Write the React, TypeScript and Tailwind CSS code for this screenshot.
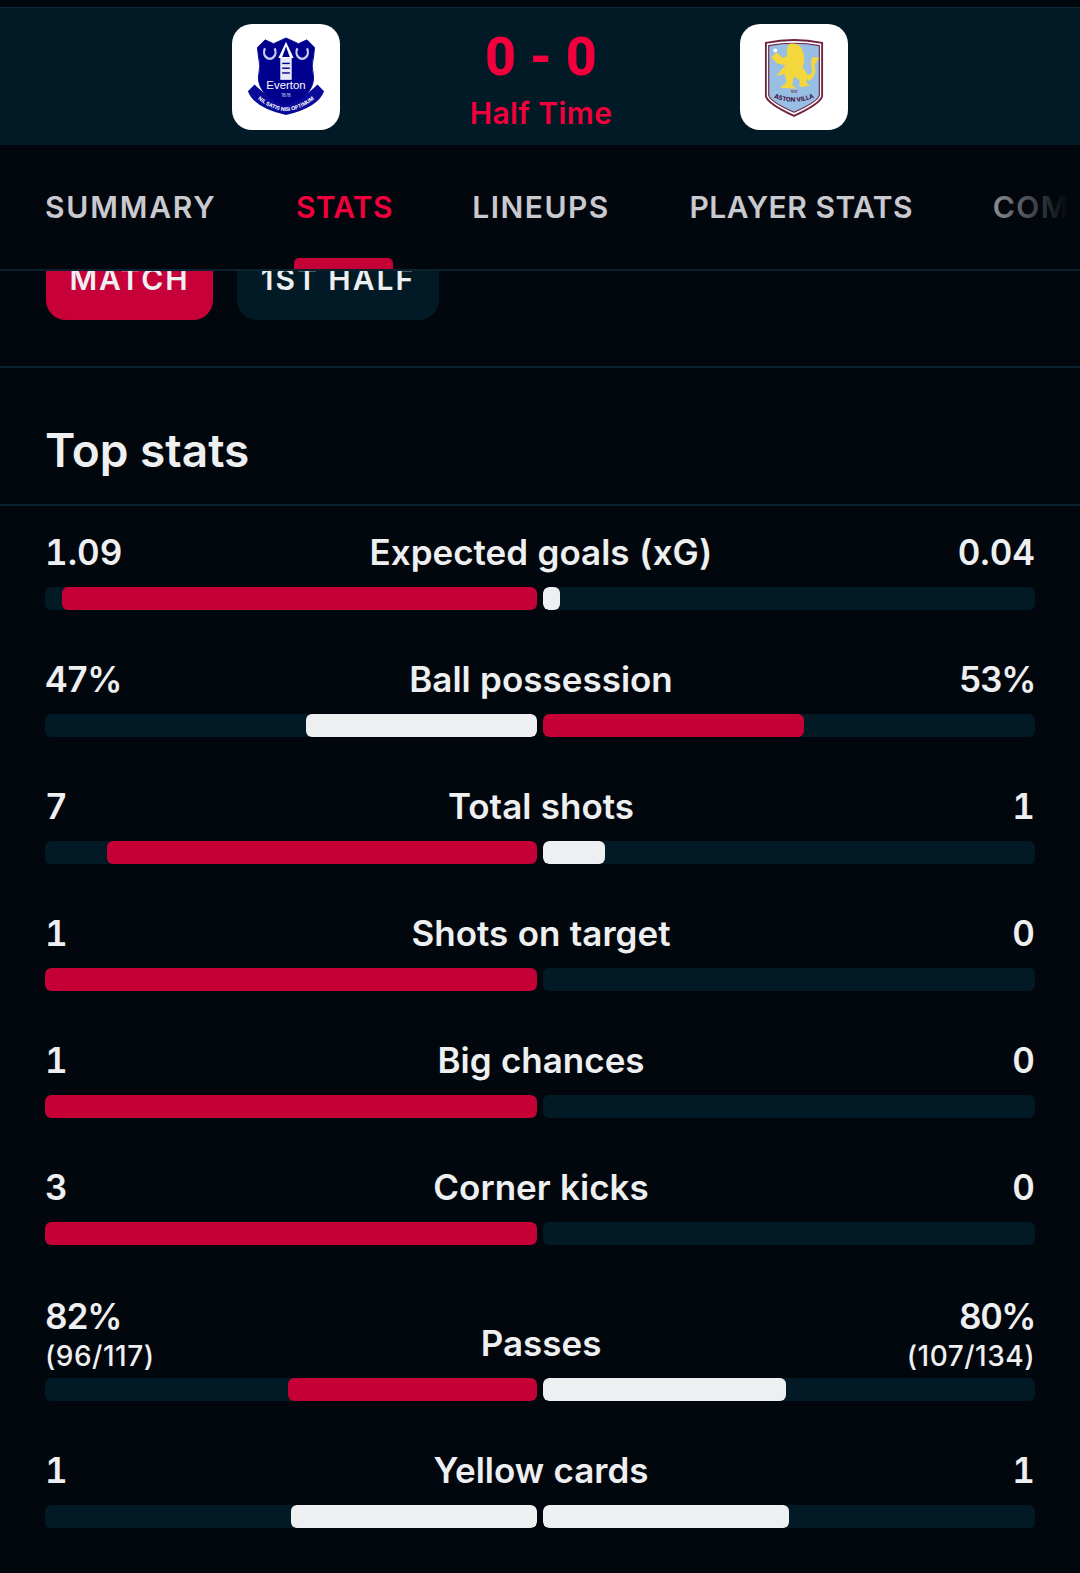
import React from "react";

const RED = "#c40037";
const WHITE = "#eeeff0";

type Row = {
  label: string;
  l: string;
  r: string;
  lSub?: string;
  rSub?: string;
  lw: number;
  rw: number;
  lc: string;
  rc: string;
};

const rows: Row[] = [
  { label: "Expected goals (xG)", l: "1.09", r: "0.04", lw: 96.5, rw: 3.5, lc: RED, rc: WHITE },
  { label: "Ball possession", l: "47%", r: "53%", lw: 47, rw: 53, lc: WHITE, rc: RED },
  { label: "Total shots", l: "7", r: "1", lw: 87.5, rw: 12.5, lc: RED, rc: WHITE },
  { label: "Shots on target", l: "1", r: "0", lw: 100, rw: 0, lc: RED, rc: WHITE },
  { label: "Big chances", l: "1", r: "0", lw: 100, rw: 0, lc: RED, rc: WHITE },
  { label: "Corner kicks", l: "3", r: "0", lw: 100, rw: 0, lc: RED, rc: WHITE },
  { label: "Passes", l: "82%", r: "80%", lSub: "(96/117)", rSub: "(107/134)", lw: 50.6, rw: 49.4, lc: RED, rc: WHITE },
  { label: "Yellow cards", l: "1", r: "1", lw: 50, rw: 50, lc: WHITE, rc: WHITE },
];

function Everton() {
  return (
    <svg viewBox="0 0 84 84" className="w-[80px] h-[80px]">
      <path d="M9 50 L2 57 Q8 74 42 82 Q76 74 82 57 L75 50 Q60 66 42 66 Q24 66 9 50Z" fill="#0a0a9a" />
      <path d="M12 11 L20 3 L29 7 L42 1 L55 7 L64 3 L72 11 L71 20 Q68 30 71 42 Q71 62 42 73 Q13 62 13 42 Q16 30 13 20Z" fill="#00008f" stroke="#0a0a9a" strokeWidth="1" />
      <path d="M20 12 A6 7 0 1 0 30 12" fill="none" stroke="#c9cdf0" strokeWidth="2.4" />
      <path d="M54 12 A6 7 0 1 0 64 12" fill="none" stroke="#c9cdf0" strokeWidth="2.4" />
      <path d="M42 5 L50 22 L34 22Z" fill="#fff" />
      <path d="M42 10 L46 21 L38 21Z" fill="#00008f" />
      <rect x="36" y="22" width="12" height="23" fill="#e8e9f8" />
      <rect x="38" y="27" width="8" height="1.5" fill="#00008f" />
      <rect x="38" y="32" width="8" height="1.5" fill="#00008f" />
      <rect x="38" y="37" width="8" height="1.5" fill="#00008f" />
      <text x="42" y="55" textAnchor="middle" fontSize="12" fill="#fff" fontFamily="'Liberation Sans', sans-serif">Everton</text>
      <text x="42" y="63" textAnchor="middle" fontSize="4.5" fill="#dfe0f6" fontFamily="Inter, sans-serif">1878</text>
      <path id="rib" d="M6 59 Q22 76 42 78 Q62 76 78 59" fill="none" />
      <text fontSize="5.4" fill="#fff" fontWeight="700" fontFamily="Inter, sans-serif">
        <textPath href="#rib" startOffset="50%" textAnchor="middle">NIL SATIS NISI OPTIMUM</textPath>
      </text>
    </svg>
  );
}

function Villa() {
  return (
    <svg viewBox="0 0 64 84" className="w-[60px] h-[79px]">
      <path d="M2 5 Q32 -1 62 5 L62 62 Q60 70 32 83 Q4 70 2 62Z" fill="#fff" stroke="#6f2341" strokeWidth="2" />
      <path d="M5 8 Q32 3 59 8 L59 61 Q57 68 32 79 Q7 68 5 61Z" fill="#97bfe3" stroke="#6f2341" strokeWidth="1.2" />
      <circle cx="12" cy="13" r="2" fill="#fff" />
      <path d="M27 6 Q38 4 41 13 Q45 22 41 31 Q49 39 45 47 L49 51 L38 52 L38 45 L32 41 L30 50 L35 54 L17 53 L24 47 L22 38 L13 41 L19 33 L23 29 L14 27 L8 21 L13 15 L20 21 L25 19 Q23 11 27 6Z" fill="#f4d73d" />
      <path d="M44 38 Q52 42 51 32 Q49 26 52 20 L59 21 L54 28 Q57 40 48 46Z" fill="#f4d73d" />
      <text x="32" y="58" textAnchor="middle" fontSize="3" fill="#6f2341" fontWeight="700" fontFamily="Inter, sans-serif">1874</text>
      <path id="avb" d="M7 62 Q32 74 57 62" fill="none" />
      <text fontSize="6.6" fill="#4a2050" fontWeight="800" fontFamily="Inter, sans-serif">
        <textPath href="#avb" startOffset="50%" textAnchor="middle">ASTON VILLA</textPath>
      </text>
    </svg>
  );
}

function Bar({ w, c, left }: { w: number; c: string; left: boolean }) {
  return (
    <div className={`flex-1 h-[23px] rounded-[6px] bg-[#021a25] flex overflow-hidden ${left ? "justify-end" : "justify-start"}`}>
      <div className="h-full rounded-[6px]" style={{ width: `${w}%`, backgroundColor: c }} />
    </div>
  );
}

function Value({ main, sub }: { main: string; sub?: string }) {
  return (
    <>
      <div className={`${main.includes("%") ? "tracking-[-1.5px]" : ""} ${sub ? "mt-[2px]" : ""}`}>{main}</div>
      {sub && <div className="text-[28px] leading-[30px] font-medium mt-[7px] mb-[-10px] normal-nums tracking-[0.5px]">{sub}</div>}
    </>
  );
}

export default function App() {
  return (
    <div
      className="w-[1080px] h-[1573px] overflow-hidden bg-[#02070d] text-[#eeeff0] pt-[7px]"
      style={{ fontFamily: "Inter, 'Noto Sans', sans-serif" }}
    >
      <header className="h-[138px] bg-[#021a25] border-t border-[#0a2a3a] flex items-start justify-center pt-[16px]">
        <div className="w-[108px] h-[106px] bg-white rounded-[20px] flex items-center justify-center">
          <Everton />
        </div>
        <div className="w-[400px] flex flex-col items-center">
          <div className="text-[54px] leading-[62px] font-extrabold text-[#f0003c] mt-[2px] ml-[2px] whitespace-pre" style={{ fontFamily: "Roboto, sans-serif" }}>0 - 0</div>
          <div className="text-[30px] leading-[36px] font-semibold text-[#f0003c] mt-[7px] ml-[2px] tracking-[0.4px]">Half Time</div>
        </div>
        <div className="w-[108px] h-[106px] bg-white rounded-[20px] flex items-center justify-center">
          <Villa />
        </div>
      </header>

      <nav className="relative z-10 h-[126px] bg-[#02070d] border-b-2 border-[#0a2230] overflow-hidden">
        <div className="flex gap-[79.5px] pl-[45px] pt-[44px] whitespace-nowrap text-[30px] leading-[36px] font-semibold text-[#c9c9d0]">
          <span className="tracking-[1.8px]">SUMMARY</span>
          <span className="relative text-[#f0003c] tracking-[0.3px]">
            STATS
            <span className="absolute left-[-2px] right-0 top-[69px] h-[11px] rounded-t-[5px] bg-[#c40037]" />
          </span>
          <span className="tracking-[1.5px]">LINEUPS</span>
          <span className="tracking-[0.5px]">PLAYER STATS</span>
          <span className="tracking-[1.5px]">COMMENTARY</span>
        </div>
        <div className="absolute right-0 top-0 bottom-0 w-[120px] bg-gradient-to-r from-transparent to-[#02070d] to-90%" />
      </nav>

      <section className="overflow-hidden h-[97px] border-b-2 border-[#0a2230]">
        <div className="flex gap-[24px] pl-[46px] mt-[-34px] text-[30px] leading-[36px] font-semibold tracking-[2px] text-[#eeeff0]">
          <div className="w-[167px] h-[83px] bg-[#c8003a] rounded-[20px] flex items-center justify-center">MATCH</div>
          <div className="w-[202px] h-[83px] bg-[#021a25] rounded-[20px] flex items-center justify-center">1ST HALF</div>
        </div>
      </section>

      <h2 className="h-[138px] pt-[28px] border-b-2 border-[#0a2230] pl-[45px] flex items-center text-[46px] font-semibold text-[#eeeff0]">
        Top stats
      </h2>

      <div className="px-[45px] pt-[28px] flex flex-col gap-[51px]">
        {rows.map((r) => (
          <div key={r.label}>
            <div className="grid grid-cols-[1fr_auto_1fr] items-end text-[35px] leading-[36px] font-semibold mb-[17px] tabular-nums">
              <div>
                <Value main={r.l} sub={r.lSub} />
              </div>
              <div className="pl-[2px]">{r.label}</div>
              <div className="text-right">
                <Value main={r.r} sub={r.rSub} />
              </div>
            </div>
            <div className="flex gap-[6px]">
              <Bar w={r.lw} c={r.lc} left />
              <Bar w={r.rw} c={r.rc} left={false} />
            </div>
          </div>
        ))}
      </div>
    </div>
  );
}
